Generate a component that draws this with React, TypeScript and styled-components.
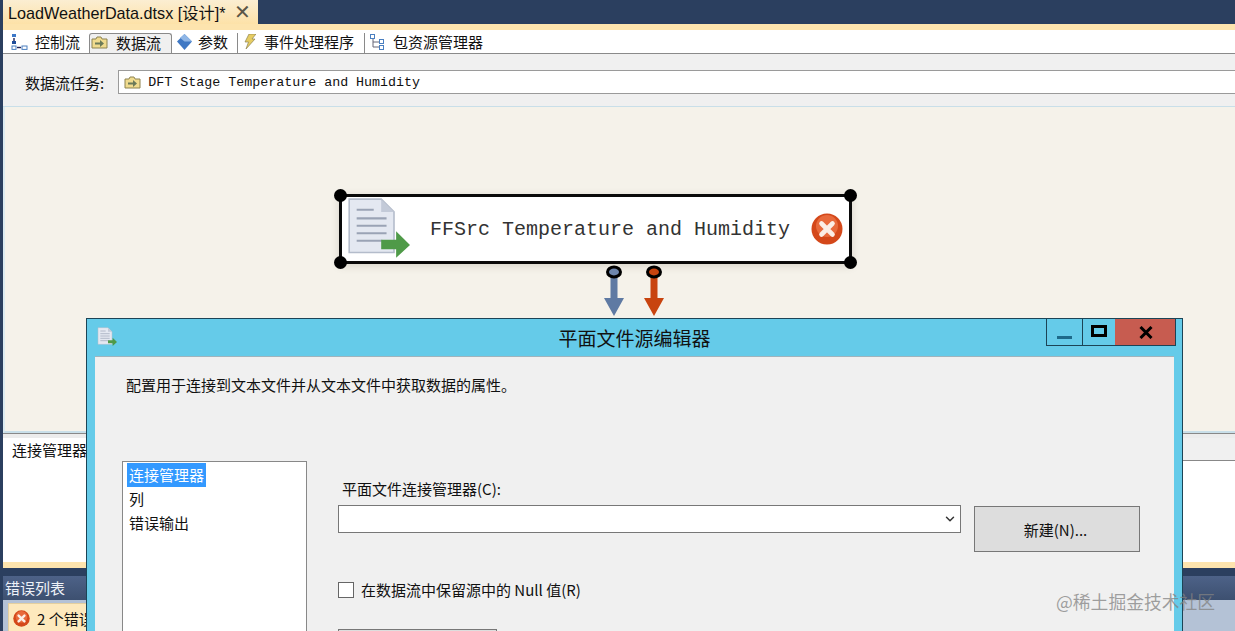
import React from "react";
import styled, { createGlobalStyle } from "styled-components";
import { ChevronDown } from "lucide-react";

const CJK = `"Noto Sans CJK SC", "Liberation Sans", sans-serif`;
const UI = `"Liberation Sans", "Noto Sans CJK SC", sans-serif`;
const MONO = `"Liberation Mono", "Noto Sans CJK SC", monospace`;

const Global = createGlobalStyle`
  html, body { margin: 0; padding: 0; background: #2b3f5f; }
  * { box-sizing: border-box; }
`;

const Shell = styled.div`
  position: relative;
  width: 1235px;
  height: 631px;
  overflow: hidden;
  padding-left: 3px;
  background: #2b3f5f;
  display: flex;
  flex-direction: column;
  font-family: ${CJK};
  color: #111;
`;

const TabStrip = styled.div`
  height: 24px;
  flex: none;
  display: flex;
`;

const DocTab = styled.div`
  width: 255px;
  display: flex;
  align-items: center;
  justify-content: space-between;
  padding: 0 7px 0 5px;
  background: linear-gradient(#fbeed2, #fde2a8);
  font-family: ${UI};
  font-size: 16.2px;
  white-space: nowrap;
`;

const CloseMark = styled.span`
  font-family: ${UI};
  font-size: 20px;
  line-height: 1;
  color: #5a5648;
`;

const YellowBar = styled.div<{ $h: number }>`
  height: ${({ $h }) => $h}px;
  flex: none;
  background: #fde4ae;
`;

const Toolbar = styled.div`
  height: 24px;
  flex: none;
  display: flex;
  align-items: stretch;
  background: #fff;
  border-bottom: 1px solid #8a8a8a;
  padding-left: 7px;
  font-size: 15px;
`;

const ToolTab = styled.div<{ $active?: boolean; $w: number; $sep?: boolean; $pad: number; $gap: number }>`
  width: ${({ $w }) => $w}px;
  display: flex;
  align-items: center;
  gap: ${({ $gap }) => $gap}px;
  padding-left: ${({ $pad }) => $pad}px;
  padding-bottom: 3px;
  white-space: nowrap;
  background: ${({ $active }) => ($active ? "#f0f0f0" : "transparent")};
  border: ${({ $active }) => ($active ? "1px solid #8a8a8a" : "none")};
  border-bottom: none;
  border-radius: ${({ $active }) => ($active ? "3px 3px 0 0" : "0")};
  border-right: ${({ $sep }) => ($sep ? "1px solid #8a8a8a" : undefined)};
  margin: 3px 0 0;
`;

const TaskRow = styled.div`
  height: 53px;
  flex: none;
  display: flex;
  align-items: center;
  gap: 14px;
  padding: 4px 0 0 22px;
  background: #f0f0f0;
  font-size: 15px;
  border-bottom: 1px solid #c9dfe9;
`;

const TaskField = styled.div`
  flex: 1;
  height: 24px;
  display: flex;
  align-items: center;
  gap: 7px;
  padding-left: 5px;
  background: #fff;
  border: 1px solid #9a9a9a;
  border-right: none;
  font-family: ${MONO};
  font-size: 13.33px;
`;

const Canvas = styled.div`
  position: relative;
  height: 326px;
  flex: none;
  background: #f5f2ea;
  border-left: 2px solid #dcebf0;
  border-bottom: 2px solid #c9dfe9;
`;

const Node = styled.div`
  position: absolute;
  left: 334px;
  top: 87px;
  width: 513px;
  height: 70px;
  display: flex;
  align-items: center;
  background: #fff;
  border: 3px solid #0a0a0a;
  box-shadow: 0 2px 8px rgba(80, 70, 50, 0.18);
`;

const NodeIcon = styled.div`
  width: 88px;
  padding-left: 4px;
  display: flex;
`;

const NodeText = styled.span`
  flex: 1;
  font-family: ${MONO};
  font-size: 20px;
  color: #333;
  white-space: nowrap;
`;

const NodeError = styled.div`
  width: 38px;
  display: flex;
`;

const Handle = styled.i<{ $x: "left" | "right"; $y: "top" | "bottom" }>`
  position: absolute;
  width: 13px;
  height: 13px;
  border-radius: 50%;
  background: #000;
  ${({ $x }) => $x}: -8px;
  ${({ $y }) => $y}: -8px;
`;

const Arrow = styled.svg<{ $x: number }>`
  position: absolute;
  left: ${({ $x }) => $x}px;
  top: 157px;
`;

const Pane = styled.div`
  height: 129px;
  flex: none;
  background: #fff;
  display: flex;
  flex-direction: column;
`;

const PaneGrip = styled.div`
  height: 5px;
  flex: none;
  background: #ececec;
  border-top: 1px solid #888;
`;

const PaneTabs = styled.div`
  height: 23px;
  flex: none;
  display: flex;
  background: #f0f0f0;
  border-bottom: 1px solid #888;
`;

const PaneTab = styled.div`
  width: 100px;
  padding-left: 9px;
  background: #fff;
  font-size: 15px;
  line-height: 24px;
  height: 23px;
`;

const ErrorTitle = styled.div`
  height: 24px;
  margin-top: 8px;
  flex: none;
  padding-left: 2px;
  background: linear-gradient(#4d6288, #3d5070);
  color: #eef2f8;
  font-size: 15px;
  line-height: 23px;
`;

const ErrorBody = styled.div`
  flex: 1;
  padding: 3px 0 0 5px;
  background: #b4c2d6;
`;

const ErrorChip = styled.div`
  width: 120px;
  height: 30px;
  display: flex;
  align-items: center;
  gap: 7px;
  padding-left: 4px;
  background: #fde9bd;
  border: 1px solid #e3cf9f;
  font-size: 15px;
  white-space: nowrap;
  overflow: hidden;
`;

const Dialog = styled.div`
  position: absolute;
  left: 86px;
  top: 318px;
  width: 1097px;
  height: 420px;
  padding: 37px 8px 0;
  background: #65cbe9;
  border: 1px solid #1c4456;
`;

const TitleIcon = styled.div`
  position: absolute;
  left: 10px;
  top: 8px;
`;

const Title = styled.div`
  position: absolute;
  left: 0;
  right: 0;
  top: 6px;
  text-align: center;
  font-size: 19px;
  line-height: 26px;
  color: #111;
`;

const Controls = styled.div`
  position: absolute;
  top: 0;
  right: 6px;
  height: 27px;
  display: flex;
  border: 1px solid #1c4456;
  border-top: none;
`;

const Control = styled.div<{ $w: number; $close?: boolean }>`
  width: ${({ $w }) => $w}px;
  display: flex;
  align-items: center;
  justify-content: center;
  background: ${({ $close }) => ($close ? "#c75c50" : "transparent")};
  border-left: 1px solid ${({ $close }) => ($close ? "transparent" : "#1c4456")};
  &:first-child { border-left: none; }
`;

const MinBar = styled.i`
  display: block;
  width: 15px;
  height: 3px;
  margin-top: 10px;
  background: #1d6a8a;
`;

const MaxBox = styled.i`
  display: block;
  width: 16px;
  height: 12px;
  margin-top: -2px;
  border: 3px solid #000;
`;

const DialogBody = styled.div`
  height: 100%;
  padding: 18px 32px 0 31px;
  background: #f0f0f0;
  border-top: 1px solid #9fb4bd;
  font-size: 15px;
`;

const Description = styled.div`
  height: 86px;
  line-height: 20px;
`;

const Columns = styled.div`
  display: flex;
  gap: 31px;
  margin-left: -4px;
`;

const NavList = styled.div`
  width: 185px;
  height: 300px;
  flex: none;
  padding: 1px 4px;
  background: #fff;
  border: 1px solid #888;
  font-size: 15px;
`;

const NavItem = styled.div<{ $selected?: boolean }>`
  width: fit-content;
  height: 24px;
  line-height: 24px;
  padding: 0 2px;
  background: ${({ $selected }) => ($selected ? "#3399ff" : "transparent")};
  color: ${({ $selected }) => ($selected ? "#fff" : "#111")};
`;

const FormColumn = styled.div`
  flex: 1;
  padding-top: 18px;
`;

const FieldLabel = styled.div`
  padding-left: 4px;
  height: 26px;
  line-height: 20px;
`;

const SelectRow = styled.div`
  display: flex;
  align-items: flex-start;
  gap: 13px;
`;

const SelectBox = styled.div`
  width: 623px;
  height: 28px;
  display: flex;
  align-items: center;
  justify-content: flex-end;
  padding-right: 3px;
  background: #fff;
  border: 1px solid #777;
`;

const NewButton = styled.div`
  width: 166px;
  height: 46px;
  margin-top: 1px;
  display: flex;
  align-items: center;
  justify-content: center;
  padding-right: 3px;
  background: #dddddd;
  border: 1px solid #777;
  font-family: ${CJK};
`;

const CheckRow = styled.div`
  display: flex;
  align-items: center;
  gap: 7px;
  margin-top: 27px;
`;

const CheckBox = styled.i`
  width: 16px;
  height: 16px;
  background: #fff;
  border: 1px solid #666;
`;

const NextButton = styled.div`
  width: 159px;
  height: 40px;
  margin-top: 29px;
  background: #dddddd;
  border: 1px solid #777;
`;

const Watermark = styled.div`
  position: absolute;
  left: 1056px;
  top: 589px;
  font-size: 17.8px;
  line-height: 24px;
  color: rgba(130, 130, 130, 0.75);
  white-space: nowrap;
`;

const DocIcon = ({ size }: { size: number }) => (
  <svg width={size} height={size} viewBox="0 0 60 60">
    <path d="M3 2h30l12 12v38H3z" fill="#e4e8f1" stroke="#b4bccb" strokeWidth="1.5" />
    <path d="M33 2v12h12z" fill="#c3cad8" />
    <path d="M10 12h16M10 20h28M10 27h28M10 34h28M10 41h24" stroke="#9aa3b5" strokeWidth="2" />
    <path d="M33 40h14v-8l13 13-13 12v-8H33z" fill="#4f9a48" />
  </svg>
);

const ErrorIcon = ({ size }: { size: number }) => (
  <svg width={size} height={size} viewBox="0 0 32 32">
    <circle cx="16" cy="16" r="15.5" fill="#d4481a" />
    <circle cx="16" cy="13" r="11" fill="#e86a3c" />
    <path d="M10.5 10.5l11 11M21.5 10.5l-11 11" stroke="#fbeee6" strokeWidth="4.6" strokeLinecap="round" />
  </svg>
);

const ControlFlowIcon = () => (
  <svg width="17" height="17" viewBox="0 0 17 17">
    <rect x="1" y="1" width="4" height="3" fill="#3c78c8" />
    <path d="M3 5v3" stroke="#225" strokeWidth="1.4" />
    <rect x="1" y="8" width="4" height="3" fill="#1f4d9a" />
    <rect x="1" y="13" width="4" height="3.4" fill="#fff" stroke="#4a7fc0" />
    <path d="M6 14.5h4" stroke="#225" strokeWidth="1.4" />
    <rect x="11" y="13" width="5" height="3.4" fill="#fff" stroke="#4a7fc0" />
  </svg>
);

const DataFlowIcon = () => (
  <svg width="17" height="13" viewBox="0 0 17 13">
    <path d="M1 3h4l1-2h4l1 2h5v9H1z" fill="#f0db8e" stroke="#8d8350" />
    <path d="M4 6.500h5V4l4 3.500-4 3.500V8.500H4z" fill="#6b7a58" />
  </svg>
);

const ParamIcon = () => (
  <svg width="15" height="16" viewBox="0 0 15 16">
    <path d="M7.5 0L15 7.5 7.5 16 0 7.5z" fill="#3f78c4" />
    <path d="M7.5 0L15 7.5H7.5L3 3.7z" fill="#8fb6e6" />
  </svg>
);

const BoltIcon = () => (
  <svg width="12" height="15" viewBox="0 0 12 15">
    <path d="M5 0h7L8 5h3L2 15l2.500-7H1z" fill="#e6cc62" stroke="#8d8350" strokeWidth="0.7" />
  </svg>
);

const PackageIcon = () => (
  <svg width="14" height="16" viewBox="0 0 14 16">
    <path d="M3 4v9h6M3 8h6" fill="none" stroke="#667" />
    <rect x="0.500" y="0.500" width="4" height="4" fill="#fff" stroke="#4a7fc0" />
    <rect x="9.500" y="5.500" width="4" height="4" fill="#fff" stroke="#4a7fc0" />
    <rect x="9.500" y="11.500" width="4" height="4" fill="#fff" stroke="#4a7fc0" />
  </svg>
);

const FlowArrow = ({ x, fill, ring }: { x: number; fill: string; ring: string }) => (
  <Arrow $x={x} width="20" height="54" viewBox="0 0 20 54">
    <path d="M6.500 12h7v22H20L10 52 0 34h6.500z" fill={fill} />
    <ellipse cx="10" cy="8" rx="6.500" ry="5" fill={ring} stroke="#000" strokeWidth="3" />
  </Arrow>
);

const App: React.FC = () => (
  <Shell>
    <Global />
    <TabStrip>
      <DocTab>
        <span>LoadWeatherData.dtsx [设计]*</span>
        <CloseMark>✕</CloseMark>
      </DocTab>
    </TabStrip>
    <YellowBar $h={6} />
    <Toolbar>
      <ToolTab $w={79} $pad={1} $gap={7}>
        <ControlFlowIcon />
        控制流
      </ToolTab>
      <ToolTab $w={83} $pad={1} $gap={8} $active>
        <DataFlowIcon />
        数据流
      </ToolTab>
      <ToolTab $w={66} $pad={5} $gap={6} $sep>
        <ParamIcon />
        参数
      </ToolTab>
      <ToolTab $w={127} $pad={6} $gap={8} $sep>
        <BoltIcon />
        事件处理程序
      </ToolTab>
      <ToolTab $w={130} $pad={5} $gap={9}>
        <PackageIcon />
        包资源管理器
      </ToolTab>
    </Toolbar>
    <TaskRow>
      <span>数据流任务:</span>
      <TaskField>
        <DataFlowIcon />
        DFT Stage Temperature and Humidity
      </TaskField>
    </TaskRow>
    <Canvas>
      <Node>
        <Handle $x="left" $y="top" />
        <Handle $x="right" $y="top" />
        <Handle $x="left" $y="bottom" />
        <Handle $x="right" $y="bottom" />
        <NodeIcon>
          <DocIcon size={64} />
        </NodeIcon>
        <NodeText>FFSrc Temperature and Humidity</NodeText>
        <NodeError>
          <ErrorIcon size={32} />
        </NodeError>
      </Node>
      <FlowArrow x={599} fill="#5f7aa3" ring="#6d86ad" />
      <FlowArrow x={639} fill="#c8440f" ring="#c8440f" />
    </Canvas>
    <Pane>
      <PaneGrip />
      <PaneTabs>
        <PaneTab>连接管理器</PaneTab>
      </PaneTabs>
    </Pane>
    <YellowBar $h={6} />
    <ErrorTitle>错误列表</ErrorTitle>
    <ErrorBody>
      <ErrorChip>
        <ErrorIcon size={17} />2 个错误
      </ErrorChip>
    </ErrorBody>
    <Dialog>
      <TitleIcon>
        <DocIcon size={20} />
      </TitleIcon>
      <Title>平面文件源编辑器</Title>
      <Controls>
        <Control $w={35}>
          <MinBar />
        </Control>
        <Control $w={33}>
          <MaxBox />
        </Control>
        <Control $w={60} $close>
          <svg width="14" height="13" viewBox="0 0 14 13">
            <path d="M1.500 1l11 11M12.500 1l-11 11" stroke="#000" strokeWidth="3" />
          </svg>
        </Control>
      </Controls>
      <DialogBody>
        <Description>配置用于连接到文本文件并从文本文件中获取数据的属性。</Description>
        <Columns>
          <NavList>
            <NavItem $selected>连接管理器</NavItem>
            <NavItem>列</NavItem>
            <NavItem>错误输出</NavItem>
          </NavList>
          <FormColumn>
            <FieldLabel>平面文件连接管理器(C):</FieldLabel>
            <SelectRow>
              <SelectBox>
                <ChevronDown size={14} strokeWidth={2.5} color="#333" />
              </SelectBox>
              <NewButton>新建(N)...</NewButton>
            </SelectRow>
            <CheckRow>
              <CheckBox />
              <span>在数据流中保留源中的 Null 值(R)</span>
            </CheckRow>
            <NextButton />
          </FormColumn>
        </Columns>
      </DialogBody>
    </Dialog>
    <Watermark>@稀土掘金技术社区</Watermark>
  </Shell>
);

export default App;
